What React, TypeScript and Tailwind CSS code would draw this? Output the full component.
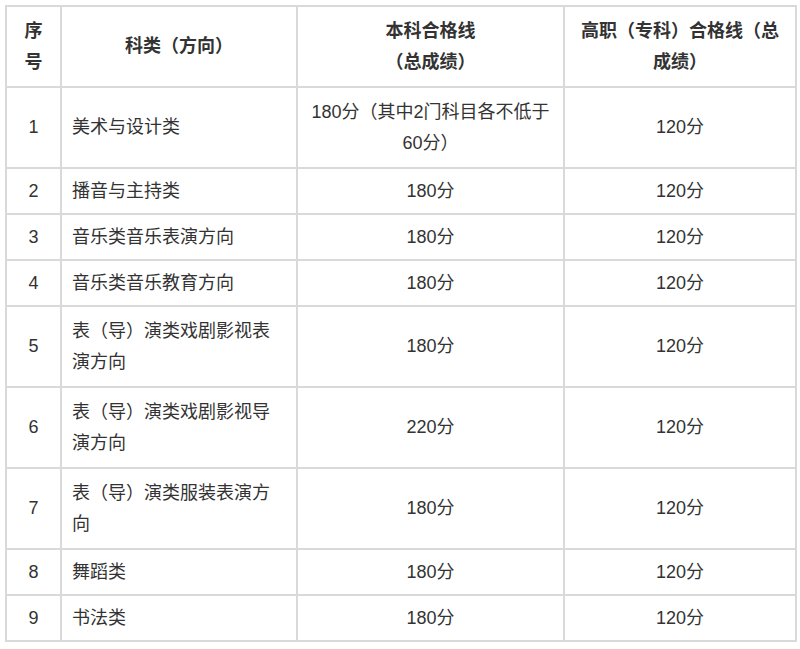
const rows = [
  { no: '1', name: '美术与设计类', bk: '180分（其中2门科目各不低于60分）', gz: '120分', h: 'h-[81px]' },
  { no: '2', name: '播音与主持类', bk: '180分', gz: '120分', h: 'h-[46px]' },
  { no: '3', name: '音乐类音乐表演方向', bk: '180分', gz: '120分', h: 'h-[46px]' },
  { no: '4', name: '音乐类音乐教育方向', bk: '180分', gz: '120分', h: 'h-[46px]' },
  { no: '5', name: '表（导）演类戏剧影视表演方向', bk: '180分', gz: '120分', h: 'h-[81px]' },
  { no: '6', name: '表（导）演类戏剧影视导演方向', bk: '220分', gz: '120分', h: 'h-[81px]' },
  { no: '7', name: '表（导）演类服装表演方向', bk: '180分', gz: '120分', h: 'h-[81px]' },
  { no: '8', name: '舞蹈类', bk: '180分', gz: '120分', h: 'h-[46px]' },
  { no: '9', name: '书法类', bk: '180分', gz: '120分', h: 'h-[46px]' },
];

const cell = 'border-2 border-[#d9d9d9] px-[10px] py-0 align-middle';

export default function App() {
  return (
    <div className="min-h-[649px] w-[800px] bg-white pt-[5px] pl-[5px] font-['Liberation_Sans','Noto_Sans_CJK_SC',sans-serif] text-[18px] leading-[31px] text-[#333]">
      <table className="w-[790px] table-fixed border-collapse">
        <colgroup>
          <col className="w-[55px]" />
          <col className="w-[236px]" />
          <col className="w-[267px]" />
          <col className="w-[232px]" />
        </colgroup>
        <thead>
          <tr className="h-[81px] font-bold">
            <th className={`${cell} text-center`}>序号</th>
            <th className={`${cell} text-center`}>科类（方向）</th>
            <th className={`${cell} text-center`}>
              本科合格线
              <br />
              （总成绩）
            </th>
            <th className={`${cell} text-center`}>高职（专科）合格线（总成绩）</th>
          </tr>
        </thead>
        <tbody>
          {rows.map((r) => (
            <tr key={r.no} className={r.h}>
              <td className={`${cell} text-center`}>{r.no}</td>
              <td className={`${cell} text-left`}>{r.name}</td>
              <td className={`${cell} text-center`}>{r.bk}</td>
              <td className={`${cell} text-center`}>{r.gz}</td>
            </tr>
          ))}
        </tbody>
      </table>
    </div>
  );
}
